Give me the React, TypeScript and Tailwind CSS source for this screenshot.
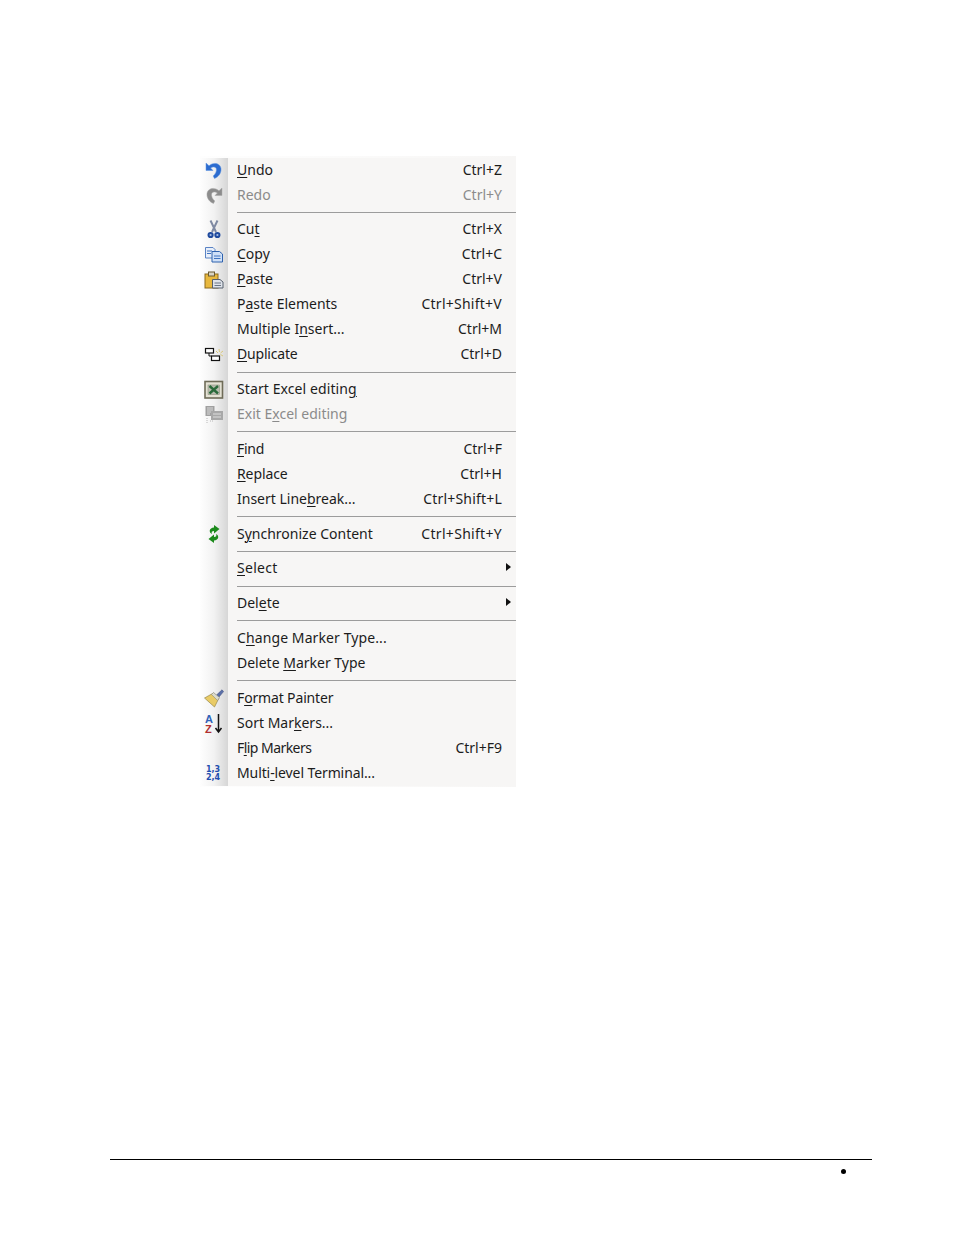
import React from "react";

const Undo = ({ gray }: { gray?: boolean }) => (
  <svg width="18" height="20" viewBox="0 0 18 20" className={gray ? "-scale-x-100" : ""}>
    <path d="M1 3 L1 10.5 L8 10.5 L5.6 8 C8 6.2 11 6.6 11.4 9 C11.8 11.4 10.4 14 8.2 16 L9.5 18.5 C13.5 17 16.5 13 16 8.5 C15.4 3.5 9 1.4 4 5.8 Z" fill={gray ? "#8c8c8c" : "#2c6ccf"} stroke={gray ? "#a8a8a8" : "#5c93e0"} strokeWidth="0.5" />
  </svg>
);
const Cut = () => (
  <svg width="18" height="20" viewBox="0 0 18 20">
    <path d="M5.5 0.5 L11 12 M12.5 0.5 L7 12" stroke="#7f8aa3" strokeWidth="2" fill="none" />
    <circle cx="5.6" cy="15" r="2.1" fill="#a9bfe4" stroke="#1f4a9e" strokeWidth="2" />
    <circle cx="12.4" cy="15" r="2.1" fill="#a9bfe4" stroke="#1f4a9e" strokeWidth="2" />
  </svg>
);
const Copy = () => (
  <svg width="20" height="18" viewBox="0 0 20 18">
    <path d="M1.5 1.5 H9 L11 3.5 V12 H1.5 Z" fill="#e8effa" stroke="#5a83c4" />
    <path d="M8 5.5 H15.5 L18.5 8 V16 H8 Z" fill="#cfe0f7" stroke="#2f62ae" />
    <path d="M3 5 H8 M3 7.5 H7 M10 10 H16.5 M10 12.5 H16.5" stroke="#3f73c0" strokeWidth="1" />
  </svg>
);
const Paste = () => (
  <svg width="20" height="18" viewBox="0 0 20 18">
    <rect x="1" y="3" width="13" height="14" fill="#e8b83e" stroke="#8d6a1c" />
    <rect x="4.5" y="1" width="6" height="4" fill="#d9d4c4" stroke="#6a5a30" />
    <path d="M8.5 8.5 H16 L19 11 V17 H8.5 Z" fill="#dfe3ea" stroke="#56606e" />
    <path d="M10.5 12 H17 M10.5 14.5 H17" stroke="#6a7584" />
  </svg>
);
const Duplicate = () => (
  <svg width="20" height="18" viewBox="0 0 20 18">
    <rect x="1.5" y="2.5" width="8" height="4.5" fill="#fff" stroke="#111" strokeWidth="1.2" />
    <rect x="7.5" y="10" width="8" height="4.5" fill="#fff" stroke="#111" strokeWidth="1.2" />
    <path d="M5 7 V10 H7.5" stroke="#111" fill="none" />
    <path d="M15 3 L15.5 6 M19 5 L16.5 7 M19 10 L16.5 8.5 M12 5 L14 7" stroke="#d9c77a" strokeWidth="1" />
  </svg>
);
const Excel = () => (
  <svg width="20" height="20" viewBox="0 0 20 20">
    <rect x="1" y="1.5" width="17.5" height="16.5" fill="#e4e2d4" stroke="#6f6c58" strokeWidth="1.6" />
    <rect x="4" y="5" width="11.5" height="9.5" fill="#b9bcae" stroke="#8e917f" strokeWidth="0.6" />
    <path d="M5.5 6 L14 13.5 M14 6 L5.5 13.5" stroke="#2a6a3a" strokeWidth="2.4" />
  </svg>
);
const ExitExcel = () => (
  <svg width="20" height="20" viewBox="0 0 20 20">
    <rect x="1.5" y="1" width="9" height="10" fill="#a0a0a0" />
    <path d="M3 3 H9 M3 5 H9 M3 7 H9 M3 9 H6" stroke="#d8d8d8" />
    <rect x="7" y="6" width="12" height="9" fill="#a8a8a8" />
    <path d="M9 9 H17 M9 12 H17" stroke="#dedede" />
    <path d="M3 13 V18 M6 16 H10" stroke="#b8b8b8" strokeDasharray="1 1" />
  </svg>
);
const Sync = () => (
  <svg width="18" height="20" viewBox="0 0 18 20">
    <path d="M9 1 L14.5 5 L9 9.5 V7 C7 7 6 8 7 10 C3.5 8.5 4 3.8 9 3.5 Z" fill="#1c8a1c" />
    <path d="M9 19 L3.5 15 L9 10.5 V13 C11 13 12 12 11 10 C14.5 11.5 14 16.2 9 16.5 Z" fill="#1c8a1c" />
  </svg>
);
const Brush = () => (
  <svg width="20" height="19" viewBox="0 0 20 19">
    <path d="M12.5 6 L18 0.8 L19.6 2.6 L15 8 Z" fill="#5a6fa8" stroke="#39487a" strokeWidth="0.5" />
    <path d="M0.5 9 L9.5 4 L15 9 L10.5 18 Z" fill="#e9cb66" stroke="#8a7a3a" strokeWidth="0.6" />
    <path d="M9.5 3.5 L15.5 8.5 L13.5 11.5 L7.5 5.5 Z" fill="#dcdccf" stroke="#7e7e70" strokeWidth="0.5" />
  </svg>
);
const Sort = () => (
  <svg width="20" height="21" viewBox="0 0 20 21">
    <text x="1" y="9.5" fontSize="11" fontWeight="700" fill="#2f62b8" fontFamily="Liberation Sans, sans-serif">A</text>
    <text x="1" y="19.5" fontSize="11" fontWeight="700" fill="#b03030" fontFamily="Liberation Sans, sans-serif">Z</text>
    <path d="M14.5 1 V18 M11.5 15 L14.5 19 L17.5 15" stroke="#111" strokeWidth="1.5" fill="none" />
  </svg>
);
const Multi = () => (
  <svg width="20" height="18" viewBox="0 0 20 18">
    <text x="2" y="7.5" fontSize="8" fontWeight="700" fill="#1f4fb0" fontFamily="DejaVu Sans, sans-serif">1,3</text>
    <text x="2" y="15.5" fontSize="8" fontWeight="700" fill="#1f4fb0" fontFamily="DejaVu Sans, sans-serif">2,4</text>
  </svg>
);

type Row = {
  label: React.ReactNode;
  key_?: string;
  icon?: React.ReactNode;
  disabled?: boolean;
  arrow?: boolean;
  cls?: string;
  keyCls?: string;
};

const U = ({ children }: { children: string }) => (
  <span className="underline decoration-1 underline-offset-2">{children}</span>
);

const groups: Row[][] = [
  [
    { label: <><U>U</U>ndo</>, key_: "Ctrl+Z", icon: <Undo /> },
    { label: "Redo", key_: "Ctrl+Y", icon: <Undo gray />, disabled: true },
  ],
  [
    { label: <>Cu<U>t</U></>, key_: "Ctrl+X", icon: <Cut /> },
    { label: <><U>C</U>opy</>, key_: "Ctrl+C", icon: <Copy /> },
    { label: <><U>P</U>aste</>, key_: "Ctrl+V", icon: <Paste /> },
    { label: <>P<U>a</U>ste Elements</>, key_: "Ctrl+Shift+V", keyCls: "tracking-[0.25px]" },
    { label: <>Multiple I<U>n</U>sert...</>, key_: "Ctrl+M" },
    { label: <><U>D</U>uplicate</>, key_: "Ctrl+D", icon: <Duplicate />, cls: "tracking-[-0.2px]" },
  ],
  [
    { label: <>Start Excel editin<U>g</U></>, icon: <Excel />, cls: "tracking-[0.1px]" },
    { label: <>Exit E<U>x</U>cel editing</>, icon: <ExitExcel /> , disabled: true },
  ],
  [
    { label: <><U>F</U>ind</>, key_: "Ctrl+F", cls: "tracking-[-0.3px]" },
    { label: <><U>R</U>eplace</>, key_: "Ctrl+H", cls: "tracking-[-0.1px]" },
    { label: <>Insert Line<U>b</U>reak...</>, key_: "Ctrl+Shift+L", keyCls: "tracking-[0.2px]" },
  ],
  [{ label: <>S<U>y</U>nchronize Content</>, key_: "Ctrl+Shift+Y", icon: <Sync />, keyCls: "tracking-[0.3px]" }],
  [{ label: <><U>S</U>elect</>, arrow: true, cls: "tracking-[0.3px]" }],
  [{ label: <>Del<U>e</U>te</>, arrow: true }],
  [
    { label: <>C<U>h</U>ange Marker Type...</>, cls: "tracking-[0.1px]" },
    { label: <>Delete <U>M</U>arker Type</> },
  ],
  [
    { label: <>F<U>o</U>rmat Painter</>, icon: <Brush />, cls: "tracking-[-0.15px]" },
    { label: <>Sort Mar<U>k</U>ers...</>, icon: <Sort /> },
    { label: <>F<U>l</U>ip Markers</>, key_: "Ctrl+F9", cls: "tracking-[-0.55px]" },
    { label: <>Multi<U>-</U>level Terminal...</>, icon: <Multi />, cls: "tracking-[-0.1px]" },
  ],
];

function MenuRow({ r }: { r: Row }) {
  return (
    <div className={`flex h-[25px] items-center ${r.disabled ? "text-[#8b8b8b]" : "text-[#1c1c1c]"}`}>
      <div className="flex h-full w-[28px] shrink-0 items-center justify-center bg-gradient-to-r from-[#fefefe] via-[#f2f2f2] to-[#d6d6d6]">
        {r.icon}
      </div>
      <div className={`ml-[9px] flex-1 whitespace-nowrap pb-[2px] ${r.cls ?? ""}`}>{r.label}</div>
      {r.key_ && <div className={`mr-[14px] whitespace-nowrap pb-[2px] ${r.keyCls ?? ""}`}>{r.key_}</div>}
      {r.arrow && (
        <div className="mr-[5px] mb-[3px] h-0 w-0 border-y-[4.5px] border-l-[5px] border-y-transparent border-l-[#111]" />
      )}
    </div>
  );
}

function Sep() {
  return (
    <div className="flex h-[9.75px] items-center">
      <div className="h-full w-[28px] shrink-0 bg-gradient-to-r from-[#fefefe] via-[#f2f2f2] to-[#d6d6d6]" />
      <div className="ml-[9px] h-px flex-1 bg-[#9c9c9c]" />
    </div>
  );
}

export default function App() {
  return (
    <div className="flex h-[1235px] w-[954px] flex-col bg-white font-['Noto_Sans','DejaVu_Sans',sans-serif] text-[14px]">
      <div className="ml-[200px] mt-[156px] w-[316px] bg-[#f7f6f5]">
        <div className="h-[1.5px] bg-gradient-to-r from-[#fefefe] to-[#f7f6f5]" />
        {groups.map((g, i) => (
          <React.Fragment key={i}>
            {i > 0 && <Sep />}
            {g.map((r, j) => (
              <MenuRow key={j} r={r} />
            ))}
          </React.Fragment>
        ))}
        <div className="h-[1.5px] bg-gradient-to-r from-[#fefefe] to-[#f7f6f5]" />
      </div>
      <div className="ml-[110px] mt-[372px] h-px w-[762px] bg-black" />
      <div className="ml-[841px] mt-[8.5px] h-[5px] w-[5px] rounded-full bg-black" />
    </div>
  );
}
